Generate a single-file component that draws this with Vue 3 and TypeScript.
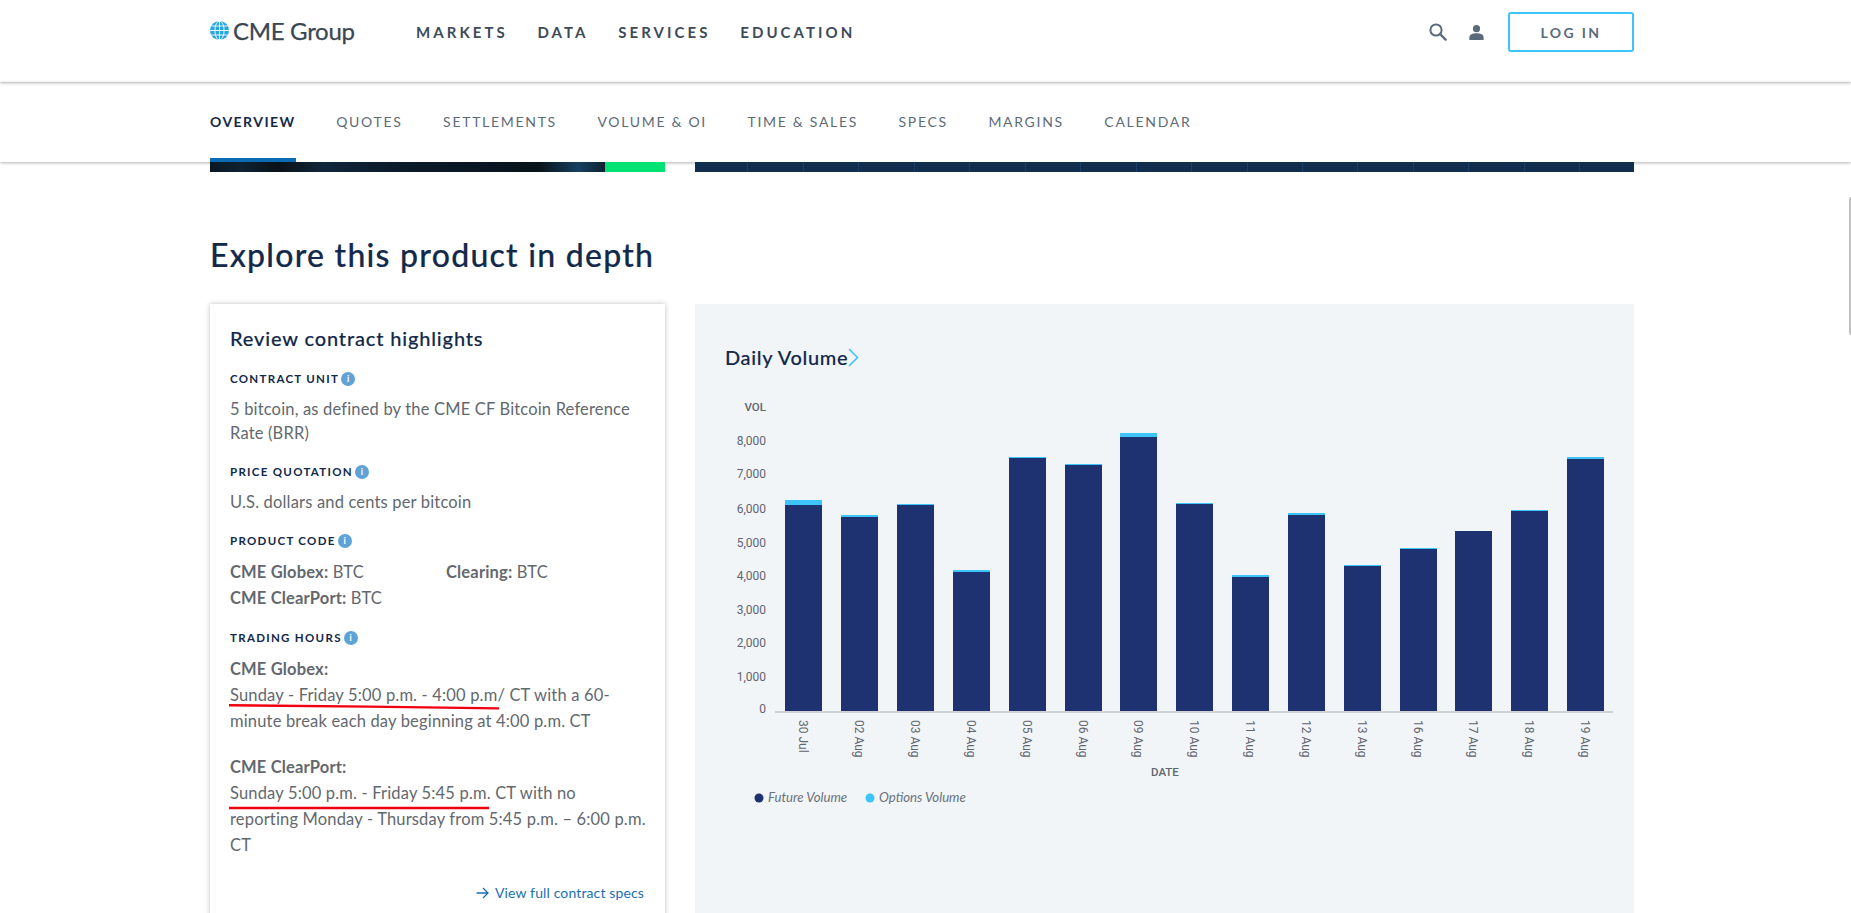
<script setup lang="ts">
const hoofdMenu = ['MARKETS', 'DATA', 'SERVICES', 'EDUCATION'];
const tabs = ['OVERVIEW', 'QUOTES', 'SETTLEMENTS', 'VOLUME & OI', 'TIME & SALES', 'SPECS', 'MARGINS', 'CALENDAR'];

const basisY = 711;

// x, top of the options part, top of the futures part
const balken = [
  { datum: '30 Jul', x: 785, optie: 500, future: 505 },
  { datum: '02 Aug', x: 841, optie: 515, future: 517 },
  { datum: '03 Aug', x: 897, optie: 504, future: 505 },
  { datum: '04 Aug', x: 953, optie: 570, future: 572 },
  { datum: '05 Aug', x: 1009, optie: 457, future: 458 },
  { datum: '06 Aug', x: 1065, optie: 464, future: 465 },
  { datum: '09 Aug', x: 1120, optie: 433, future: 437 },
  { datum: '10 Aug', x: 1176, optie: 503, future: 504 },
  { datum: '11 Aug', x: 1232, optie: 575, future: 577 },
  { datum: '12 Aug', x: 1288, optie: 513, future: 515 },
  { datum: '13 Aug', x: 1344, optie: 565, future: 566 },
  { datum: '16 Aug', x: 1400, optie: 548, future: 549 },
  { datum: '17 Aug', x: 1455, optie: 531, future: 531 },
  { datum: '18 Aug', x: 1511, optie: 510, future: 511 },
  { datum: '19 Aug', x: 1567, optie: 457, future: 459 },
];

const yLabels = [
  { tekst: '8,000', y: 441 },
  { tekst: '7,000', y: 474 },
  { tekst: '6,000', y: 509 },
  { tekst: '5,000', y: 543 },
  { tekst: '4,000', y: 576 },
  { tekst: '3,000', y: 610 },
  { tekst: '2,000', y: 643 },
  { tekst: '1,000', y: 677 },
  { tekst: '0', y: 709 },
];
</script>

<template>
  <div class="pagina">
    <header class="kop">
      <div class="logo">
        <svg width="19" height="19" viewBox="0 0 19 19">
          <circle cx="9.5" cy="9.5" r="9.5" fill="#27a5e0" />
          <g fill="none" stroke="#fff" stroke-width="0.9">
            <ellipse cx="9.5" cy="9.5" rx="4.6" ry="9.5" />
            <path d="M9.5 0V19M0 9.5H19M1.3 5H17.7M1.3 14H17.7" />
          </g>
        </svg>
        <span>CME Group</span>
      </div>
      <nav class="hoofd-menu">
        <a v-for="item in hoofdMenu" :key="item">{{ item }}</a>
      </nav>
      <div class="kop-rechts">
        <svg class="zoek" width="18" height="18" viewBox="0 0 18 18">
          <circle cx="7" cy="7" r="5.6" fill="none" stroke="#5b6b7a" stroke-width="2" />
          <path d="M11 11l5.6 5.6" stroke="#5b6b7a" stroke-width="2.4" stroke-linecap="round" />
        </svg>
        <svg class="persoon" width="15" height="15" viewBox="0 0 15 15">
          <circle cx="7.5" cy="3.7" r="3.6" fill="#5b6b7a" />
          <path d="M0.4 15V12.2C0.4 9.6 3.6 8.2 7.5 8.2S14.6 9.6 14.6 12.2V15Z" fill="#5b6b7a" />
        </svg>
        <button class="inloggen">LOG IN</button>
      </div>
    </header>

    <nav class="tabs">
      <a v-for="(tab, i) in tabs" :key="tab" :class="{ actief: i === 0 }">{{ tab }}</a>
    </nav>

    <div class="strook-rij">
      <div class="strook-links"><div class="groen"></div></div>
      <div class="strook-rechts"></div>
    </div>

    <h1 class="kopje">Explore this product in depth</h1>

    <div class="inhoud">
      <section class="kaart">
        <h2>Review contract highlights</h2>

        <h3>CONTRACT UNIT<i class="info">i</i></h3>
        <p>5 bitcoin, as defined by the CME CF Bitcoin Reference<br />Rate (BRR)</p>

        <h3>PRICE QUOTATION<i class="info">i</i></h3>
        <p>U.S. dollars and cents per bitcoin</p>

        <h3>PRODUCT CODE<i class="info">i</i></h3>
        <div class="codes">
          <span><b>CME Globex:</b> BTC</span>
          <span><b>Clearing:</b> BTC</span>
          <span><b>CME ClearPort:</b> BTC</span>
        </div>

        <h3>TRADING HOURS<i class="info">i</i></h3>
        <div class="uren">
          <b>CME Globex:</b><br />
          Sunday - Friday 5:00 p.m. - 4:00 p.m/ CT with a 60-<br />
          minute break each day beginning at 4:00 p.m. CT
        </div>
        <div class="uren tweede">
          <b>CME ClearPort:</b><br />
          Sunday 5:00 p.m. - Friday 5:45 p.m. CT with no<br />
          reporting Monday - Thursday from 5:45 p.m. – 6:00 p.m.<br />
          CT
        </div>

        <a class="specs">
          <svg width="13" height="12" viewBox="0 0 13 12">
            <path d="M0.5 6H12M7 1l5 5-5 5" fill="none" stroke="#1b6fb5" stroke-width="1.3" />
          </svg>
          View full contract specs
        </a>

        <svg class="streep een" width="272" height="6" viewBox="0 0 272 6">
          <path d="M0 1.2L140 2.6L270 4.4" fill="none" stroke="#f0000f" stroke-width="2.4" />
        </svg>
        <svg class="streep twee" width="262" height="4" viewBox="0 0 262 4">
          <path d="M0 2H260" fill="none" stroke="#f0000f" stroke-width="2.4" />
        </svg>
      </section>

      <section class="grafiek-paneel">
        <h2>Daily Volume<svg width="11" height="19" viewBox="0 0 11 19"><path d="M1 1l8.5 8.5L1 18" fill="none" stroke="#3cc4fb" stroke-width="1.6" /></svg></h2>
        <svg class="grafiek" width="939" height="430" viewBox="695 390 939 430">
          <text class="as-titel" x="766" y="411" text-anchor="end">VOL</text>
          <text v-for="l in yLabels" :key="l.tekst" class="as-label" x="766" :y="l.y + 4" text-anchor="end">{{ l.tekst }}</text>

          <g v-for="b in balken" :key="b.datum">
            <rect :x="b.x" :y="b.optie" width="37" :height="b.future - b.optie" fill="#3cc4fb" />
            <rect :x="b.x" :y="b.future" width="37" :height="basisY - b.future" fill="#1e3272" />
            <text class="as-label" :transform="`translate(${b.x + 14} 720) rotate(90)`">{{ b.datum }}</text>
          </g>
          <rect x="775" :y="basisY" width="838" height="2" fill="#cfd3d8" />

          <text class="as-titel" x="1151" y="776">DATE</text>

          <circle cx="759" cy="798" r="4.5" fill="#1e3272" />
          <text class="legenda" x="768" y="802">Future Volume</text>
          <circle cx="870" cy="798" r="4.5" fill="#3cc4fb" />
          <text class="legenda" x="879" y="802">Options Volume</text>
        </svg>
      </section>
    </div>

    <div class="schuif"></div>
  </div>
</template>

<style>
html,
body {
  margin: 0;
  height: 100%;
  overflow: hidden;
  background: #fff;
}
</style>

<style scoped>
.pagina {
  position: relative;
  height: 913px;
  overflow: hidden;
  font-family: Lato, "Open Sans", sans-serif;
  background: #fff;
}

.kop {
  height: 82px;
  box-sizing: border-box;
  padding: 0 217px 0 210px;
  display: flex;
  align-items: flex-start;
  box-shadow: 0 1px 3px rgba(0, 0, 0, 0.3);
  position: relative;
  z-index: 2;
}

.logo {
  display: flex;
  align-items: center;
  gap: 4px;
  height: 60px;
  width: 206px;
  color: #3a4652;
  font-size: 24px;
  letter-spacing: -0.3px;
  -webkit-text-stroke: 0.25px #3a4652;
}

.hoofd-menu {
  display: flex;
  gap: 29.8px;
  height: 64px;
  align-items: center;
}

.hoofd-menu a {
  font-size: 15px;
  font-weight: 700;
  letter-spacing: 3.05px;
  color: #3d4b59;
}

.kop-rechts {
  margin-left: auto;
  height: 64px;
  display: flex;
  align-items: center;
}

.zoek {
  margin-right: 22px;
}

.persoon {
  margin-right: 24px;
}

.inloggen {
  width: 126px;
  height: 40px;
  box-sizing: border-box;
  border: 2px solid #3cc4fb;
  border-radius: 3px;
  background: #fff;
  font-family: inherit;
  font-size: 14px;
  font-weight: 700;
  letter-spacing: 2.4px;
  color: #5b6b7a;
}

.tabs {
  height: 80px;
  box-sizing: border-box;
  padding: 0 217px 0 210px;
  display: flex;
  gap: 40.5px;
  box-shadow: 0 1px 3px rgba(0, 0, 0, 0.3);
  position: relative;
  z-index: 1;
}

.tabs a {
  height: 80px;
  box-sizing: border-box;
  padding-top: 31px;
  font-size: 14px;
  line-height: 18px;
  font-weight: 400;
  letter-spacing: 1.7px;
  color: #5d6b79;
}

.tabs a.actief {
  font-weight: 700;
  letter-spacing: 1.45px;
  color: #14294a;
  border-bottom: 4px solid #0b6bb5;
}

.strook-rij {
  position: relative;
  z-index: 2;
  height: 10px;
  padding: 0 217px 0 210px;
  display: grid;
  grid-template-columns: 455px 939px;
  gap: 30px;
}

.strook-links {
  display: flex;
  justify-content: flex-end;
  background: linear-gradient(90deg, #0a1722 0%, #0e2233 7%, #0a1118 15%, #10263a 25%, #0b1a28 42%, #0a1622 58%, #07121a 72%, #17405f 81%, #0b2030 87%);
}

.groen {
  width: 60px;
  background: #00e272;
}

.strook-rechts {
  background: repeating-linear-gradient(90deg, #122e4f 0, #122e4f 52.45px, #1a3f6a 52.45px, #1a3f6a 53.45px, #122e4f 53.45px, #122e4f 55.45px);
}

.kopje {
  margin: 64px 217px 0 210px;
  height: 38px;
  font-size: 32px;
  line-height: 38px;
  font-weight: 500;
  letter-spacing: 1.25px;
  color: #12294a;
  -webkit-text-stroke: 0.2px #12294a;
}

.inhoud {
  margin-top: 30px;
  padding: 0 217px 0 210px;
  display: grid;
  grid-template-columns: 455px 939px;
  gap: 30px;
}

.kaart {
  position: relative;
  box-sizing: border-box;
  padding: 22px 20px 60px;
  height: 640px;
  background: #fff;
  box-shadow: 0 0 5px rgba(0, 0, 0, 0.25);
  font-size: 16.5px;
  letter-spacing: 0.17px;
  line-height: 24px;
  color: #63686e;
}

.kaart h2 {
  margin: 0 0 19px;
  font-size: 20px;
  line-height: 24px;
  font-weight: 500;
  letter-spacing: 0.85px;
  color: #12294a;
  -webkit-text-stroke: 0.15px #12294a;
}

.kaart h3 {
  margin: 17px 0 8px;
  height: 20px;
  display: flex;
  align-items: center;
  font-size: 11.5px;
  line-height: 20px;
  font-weight: 700;
  letter-spacing: 1.3px;
  color: #12294a;
  white-space: pre;
}

.kaart h2 + h3 {
  margin-top: 19px;
}

.kaart p {
  margin: 0;
}

.info {
  width: 14px;
  height: 14px;
  margin-left: 2px;
  border-radius: 50%;
  background: #5fa3d6;
  color: #fff;
  font-size: 9px;
  line-height: 14px;
  font-style: normal;
  font-weight: 700;
  letter-spacing: 0;
  text-align: center;
}

.codes {
  display: grid;
  grid-template-columns: 216px 1fr;
  line-height: 26px;
}

.uren {
  margin-top: 1px;
  line-height: 26px;
  white-space: nowrap;
}

.uren.tweede {
  margin-top: 20px;
}

.kaart b {
  font-weight: 700;
}

.specs {
  position: absolute;
  top: 578px;
  right: 21px;
  display: flex;
  align-items: center;
  gap: 6px;
  font-size: 14px;
  letter-spacing: 0.13px;
  line-height: 22px;
  color: #1b6fb5;
}

.streep {
  position: absolute;
  left: 19px;
}

.streep.een {
  top: 400px;
}

.streep.twee {
  top: 502px;
}

.grafiek-paneel {
  box-sizing: border-box;
  padding-top: 39px;
  background: #f1f5f8;
}

.grafiek-paneel h2 {
  margin: 0 0 19px 30px;
  height: 28px;
  display: flex;
  align-items: center;
  font-size: 20px;
  line-height: 28px;
  font-weight: 500;
  letter-spacing: 0.65px;
  color: #12294a;
  -webkit-text-stroke: 0.15px #12294a;
}

.grafiek {
  display: block;
}

.as-label {
  font-family: Roboto, sans-serif;
  font-size: 12px;
  fill: #5f6670;
}

.as-titel {
  font-family: Roboto, sans-serif;
  font-size: 11.5px;
  font-weight: 500;
  fill: #5f6670;
}

.legenda {
  font-family: Lato, sans-serif;
  font-size: 13.2px;
  font-style: italic;
  fill: #6b717a;
}

.schuif {
  position: absolute;
  top: 197px;
  right: 0;
  width: 2px;
  height: 138px;
  border-radius: 2px 0 0 2px;
  background: #c1c1c1;
}
</style>
